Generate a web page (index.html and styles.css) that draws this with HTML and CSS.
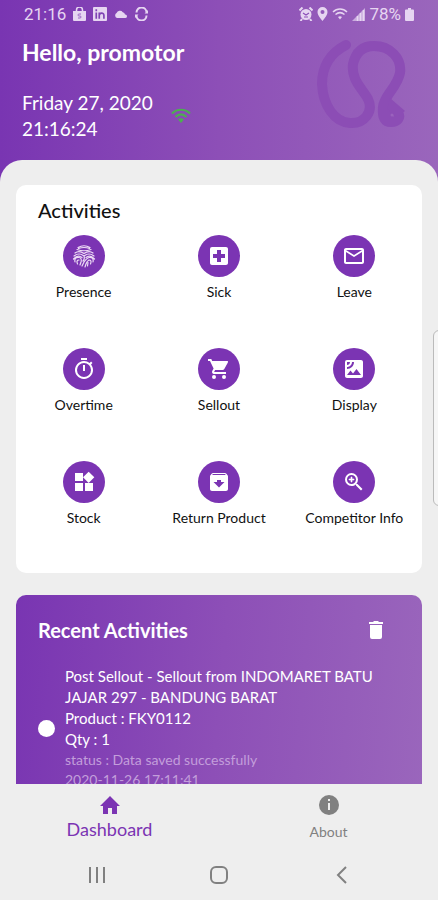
FILE: index.html
```html
<!DOCTYPE html>
<html lang="en">
<head>
<meta charset="utf-8">
<meta name="viewport" content="width=device-width, initial-scale=1">
<title>Dashboard</title>
<link rel="stylesheet" href="styles.css">
</head>
<body>
<div class="app">
  <header class="header">
    <div class="status">
      <div class="status-group">
        <span class="clock">21:16</span>
        <svg class="bag" width="13" height="14" viewBox="0 0 13 14"><path d="M0 4h13v9a1 1 0 0 1-1 1H1a1 1 0 0 1-1-1z" fill="currentColor"/><path d="M3.500 5V3a3 3 0 0 1 6 0v2" fill="none" stroke="currentColor" stroke-width="1.500"/><path d="M8 7H6a1 1 0 0 0 0 2h1a1 1 0 0 1 0 2H5" fill="none" stroke="#9a67c4"/></svg>
        <svg width="14" height="14" viewBox="0 0 15 15"><rect width="15" height="15" rx="1" fill="currentColor"/><path d="M3.500 6v6.500M3.500 2.500v2M6.700 12.500V6M6.700 9c0-3 5-3.500 5 0v3.500" fill="none" stroke="#7f42b4" stroke-width="1.800"/></svg>
        <svg width="14" height="8" viewBox="0 0 15 9"><path d="M3 9a3 3 0 0 1-.5-5.500A4 4 0 0 1 9.500 2.500 3 3 0 0 1 12 5a2 2 0 0 1 .5 4z" fill="currentColor"/></svg>
        <svg width="13" height="14" viewBox="0 0 13 14"><path d="M1.500 5.500a5 5 0 0 1 10 0M11.500 8.500a5 5 0 0 1-10 0" fill="none" stroke="currentColor" stroke-width="2"/><path d="M13 3v3.500H9.500zM0 11V7.500h3.500z" fill="currentColor"/></svg>
      </div>
      <div class="status-group right">
        <svg width="14" height="14" viewBox="0 0 14 14"><circle cx="7" cy="7.500" r="5.500" fill="currentColor"/><path d="M.5 3.500l3-3M13.500 3.500l-3-3M3 12l-1.500 2M11 12l1.500 2" stroke="currentColor" stroke-width="2"/><path d="M4 6l3 2 3-2M5 10h4" fill="none" stroke="#8c4fb8" stroke-width="1.200"/></svg>
        <svg width="11" height="14" viewBox="0 0 11 14"><path fill-rule="evenodd" d="M5.500 0A5 5 0 0 0 .5 5c0 3.500 5 9 5 9s5-5.500 5-9a5 5 0 0 0-5-5zm0 3a2 2 0 1 1 0 4 2 2 0 0 1 0-4z" fill="currentColor"/></svg>
        <svg class="wifi" width="16" height="13" viewBox="0 0 16 13"><path d="M1 4c4-4 10-4 14 0M3.500 6.500c3-2.500 6-2.500 9 0" fill="none" stroke="currentColor" stroke-width="1.500"/><path d="M6 9q2-1.500 4 0l-2 2.500z" fill="currentColor"/></svg>
        <svg width="13" height="13" viewBox="0 0 13 13"><path d="M0 13L13 0v13z" fill="currentColor" opacity=".65"/><path d="M5.500 8v5M8.500 5v8M11.500 2v11" stroke="currentColor" stroke-width="1.500"/></svg>
        <span class="percent">78%</span>
        <svg width="9" height="13" viewBox="0 0 9 13"><path d="M3 0h3v1.500h2a1 1 0 0 1 1 1V12a1 1 0 0 1-1 1H1a1 1 0 0 1-1-1V2.500a1 1 0 0 1 1-1h2z" fill="currentColor"/></svg>
      </div>
    </div>
    <div class="greeting">
      <div>
        <h1>Hello, promotor</h1>
        <div class="date-row">
          <p>Friday 27, 2020<br>21:16:24</p>
          <svg width="20" height="16" viewBox="0 0 20 16"><path d="M1 5.500c5-5 13-5 18 0M4.500 9c3.500-3.500 7.500-3.500 11 0" fill="none" stroke="#4caf50" stroke-width="2.200"/><path d="M7 11.500q3-2.500 6 0L10 15z" fill="#4caf50"/></svg>
        </div>
      </div>
      <svg class="brand" width="92" height="92" viewBox="0 0 92 92"><path d="M32 6C16 14 8 28 8 45C9 66 20 83 36 84C50 85 60 73 54 60C48 49 37 41 39 25C42 12 50 7 60 7C76 7 88 19 86 34C83 49 70 56 69 68C68 79 71 83 77 83C84 83 87 78 84 74C78 66 74 70 74 76" fill="none" stroke="#8c4db5" stroke-width="10" stroke-linecap="round" stroke-linejoin="round"/><path d="M76 59l15 13-8 6-10-8z" fill="#8c4db5"/><circle cx="78" cy="76" r="1.500" fill="#9a62bd"/></svg>
    </div>
  </header>

  <main class="sheet">
    <section class="card">
      <h2>Activities</h2>
      <div class="grid">
        <button type="button"><span class="disc"><svg class="lines" viewBox="0 0 24 24"><path d="M6 3.500Q12 0 18 3.500M5 5.500Q12 8 19 5.500M6.500 4.500Q12 2.500 17.500 4.500M3 9Q7 6 12 9.500Q17 6 21 9M2 12Q7 8 12 12Q17 8 22 12M1.500 15Q6 10 10 13.500M22.500 15Q18 10 14 13.500M3 18Q2 13 7 13.500Q10 14 9 18L8 21M21 18Q22 13 17 13.500Q15 14 12 18L10 22M5.500 20Q4 16 7 16M18.500 20Q20 16 17 16Q15 17 14 20L13 23M12 12Q13 15 11 17M16 18.500L15.500 22"/></svg></span><span>Presence</span></button>
        <button type="button"><span class="disc"><svg viewBox="0 0 24 24"><path d="M19 3H5a2 2 0 0 0-2 2v14c0 1.100.9 2 2 2h14c1.100 0 2-.9 2-2V5c0-1.100-.9-2-2-2zm-1 11h-4v4h-4v-4H6v-4h4V6h4v4h4v4z"/></svg></span><span>Sick</span></button>
        <button type="button"><span class="disc"><svg viewBox="0 0 24 24"><path d="M20 4H4c-1.100 0-2 .9-2 2v12c0 1.100.9 2 2 2h16c1.100 0 2-.9 2-2V6c0-1.100-.9-2-2-2zm0 14H4V8l8 5 8-5v10zm-8-7L4 6h16l-8 5z"/></svg></span><span>Leave</span></button>
        <button type="button"><span class="disc"><svg viewBox="0 0 24 24"><path d="M15 1H9v2h6V1zm-4 13h2V8h-2v6zm8.030-6.610l1.420-1.420c-.43-.51-.9-.99-1.410-1.410l-1.420 1.420A8.960 8.960 0 0 0 12 4a9 9 0 1 0 7.030 3.390zM12 20a7 7 0 1 1 0-14 7 7 0 0 1 0 14z"/></svg></span><span>Overtime</span></button>
        <button type="button"><span class="disc"><svg viewBox="0 0 24 24"><path d="M7 18a2 2 0 1 0 0 4 2 2 0 0 0 0-4zM1 2v2h2l3.600 7.590-1.350 2.450C4.520 15.370 5.480 17 7 17h12v-2H7.420a.25.25 0 0 1-.25-.25l.03-.12.900-1.630h7.450c.75 0 1.410-.41 1.750-1.030l3.580-6.490A1 1 0 0 0 20 4H5.210l-.94-2H1zm16 16a2 2 0 1 0 0 4 2 2 0 0 0 0-4z"/></svg></span><span>Sellout</span></button>
        <button type="button"><span class="disc"><svg viewBox="0 0 24 24"><path d="M19 3H5a2 2 0 0 0-2 2v14c0 1.100.9 2 2 2h14c1.100 0 2-.9 2-2V5c0-1.100-.9-2-2-2zM5 4.990h3C8 6.650 6.660 8 5 8V4.990zM5 12v-2c2.760 0 5-2.250 5-5.010h2C12 8.860 8.870 12 5 12zm0 6l3.500-4.500 2.500 3.010L14.500 12l4.500 6H5z"/></svg></span><span>Display</span></button>
        <button type="button"><span class="disc"><svg viewBox="0 0 24 24"><path d="M13 13v8h8v-8h-8zM3 21h8v-8H3v8zM3 3v8h8V3H3zm13.660-1.310L11 7.340 16.660 13l5.660-5.660-5.660-5.650z"/></svg></span><span>Stock</span></button>
        <button type="button"><span class="disc"><svg viewBox="0 0 24 24"><path d="M20.540 5.230l-1.390-1.680C18.880 3.210 18.470 3 18 3H6c-.47 0-.88.21-1.160.55L3.460 5.230C3.170 5.570 3 6.020 3 6.500V19c0 1.100.9 2 2 2h14c1.100 0 2-.9 2-2V6.500c0-.48-.17-.93-.46-1.270zM12 17.500L6.500 12H10v-2h4v2h3.500L12 17.500zM5.120 5l.81-1h12l.94 1H5.120z"/></svg></span><span>Return Product</span></button>
        <button type="button"><span class="disc"><svg viewBox="0 0 24 24"><path d="M15.500 14h-.79l-.28-.27A6.470 6.470 0 0 0 16 9.500 6.500 6.500 0 1 0 9.500 16c1.610 0 3.090-.59 4.230-1.570l.27.28v.79l5 4.990L20.490 19l-4.990-5zm-6 0a4.500 4.500 0 1 1 0-9 4.500 4.500 0 0 1 0 9z"/><path d="M12 10h-2v2H9v-2H7V9h2V7h1v2h2v1z" stroke="#fff" stroke-width=".6"/></svg></span><span>Competitor Info</span></button>
      </div>
    </section>

    <section class="recent">
      <div class="recent-head">
        <h2>Recent Activities</h2>
        <button type="button" class="trash" aria-label="Delete"><svg width="14" height="18" viewBox="0 0 14 18"><path d="M0 1h4l1-1h4l1 1h4v2H0zM1 4h12v12a2 2 0 0 1-2 2H3a2 2 0 0 1-2-2z" fill="#fff"/></svg></button>
      </div>
      <div class="entry">
        <span class="dot"></span>
        <div class="entry-text">
          <p>Post Sellout - Sellout from INDOMARET BATU JAJAR 297 - BANDUNG BARAT</p>
          <p>Product : FKY0112</p>
          <p>Qty : 1</p>
          <p class="meta">status : Data saved successfully</p>
          <p class="meta">2020-11-26 17:11:41</p>
        </div>
      </div>
    </section>
  </main>

  <footer class="footer">
    <nav class="tabs">
      <a href="#dashboard" class="tab active"><svg width="20" height="18" viewBox="0 0 20 18"><path d="M8 18v-6h4v6h5v-8h3L10 0 0 10h3v8z" fill="currentColor"/></svg><span>Dashboard</span></a>
      <a href="#about" class="tab"><svg width="22" height="22" viewBox="0 0 22 22"><circle cx="11" cy="11" r="10" fill="currentColor"/><path d="M10 5h2v2h-2zM10 9h2v7h-2z" fill="#eee"/></svg><span>About</span></a>
    </nav>
    <div class="system">
      <button type="button" aria-label="Recent apps"><svg width="18" height="18" viewBox="0 0 18 18"><path d="M2 1v16M9 1v16M16 1v16" stroke="currentColor" stroke-width="2"/></svg></button>
      <button type="button" aria-label="Home"><svg width="18" height="18" viewBox="0 0 18 18"><rect x="1" y="1" width="16" height="16" rx="5" fill="none" stroke="currentColor" stroke-width="2"/></svg></button>
      <button type="button" aria-label="Back"><svg width="18" height="18" viewBox="0 0 18 18"><path d="M14 1L6 9l8 8" fill="none" stroke="currentColor" stroke-width="2"/></svg></button>
    </div>
  </footer>
  <div class="edge"></div>
</div>
</body>
</html>
```
FILE: styles.css
```css
* { box-sizing: border-box; }
body, h1, h2, p { margin: 0; }
body { font-family: Lato, "Open Sans", sans-serif; color: #111; }
svg { display: block; flex: none; }
button { font: inherit; color: inherit; background: none; border: 0; padding: 0; }

.app {
  position: relative;
  display: flex;
  flex-direction: column;
  height: 100vh;
  overflow: hidden;
  background: linear-gradient(90deg, #7935b2, #8d4fb7 50%, #9a66bc);
}

.header { flex: none; color: #fff; }
.status {
  display: flex;
  justify-content: space-between;
  height: 28px;
  padding: 0 24px;
  font: 17px/28px Roboto, sans-serif;
  color: #e6d5f1;
}
.status-group { display: flex; align-items: center; gap: 7px; }
.status-group.right { gap: 4px; }

.greeting {
  display: flex;
  justify-content: space-between;
  height: 132px;
  padding: 8px 32px 0 22px;
}
h1 { font-size: 23px; line-height: 32px; font-weight: 700; }
.date-row { display: flex; align-items: center; gap: 18px; margin-top: 22px; }
.date-row p { font-size: 19px; line-height: 26px; }
.brand { margin-top: 3px; }

.sheet {
  flex: 1;
  min-height: 0;
  overflow: hidden;
  padding: 25px 16px 0;
  border-radius: 22px 22px 0 0;
  background: #eee;
}
.card {
  padding: 10px 0 39px;
  border-radius: 10px;
  background: #fff;
}
h2 { font-size: 20px; line-height: 30px; font-weight: 500; }
.card h2 { padding-left: 22px; }
.grid {
  display: grid;
  grid-template-columns: repeat(3, 1fr);
  row-gap: 46px;
  margin-top: 10px;
  padding-bottom: 6px;
}
.grid button {
  display: flex;
  flex-direction: column;
  align-items: center;
  gap: 5px;
  font-size: 14px;
  line-height: 20px;
  white-space: nowrap;
}
.disc {
  display: grid;
  place-items: center;
  width: 42px;
  height: 42px;
  border-radius: 50%;
  background: #7b34b3;
}
.disc svg { width: 24px; height: 24px; fill: #fff; }
.disc .lines { fill: none; stroke: #eddcf5; stroke-width: 1.2; stroke-linecap: round; }

.recent {
  margin-top: 22px;
  padding: 20px 22px;
  border-radius: 10px;
  color: #fff;
  background: linear-gradient(95deg, #7935b2, #8d4fb7 50%, #9a66bc);
}
.recent-head { display: flex; justify-content: space-between; align-items: center; }
.recent h2 { font-weight: 700; }
.trash { margin-right: 17px; }
.entry { display: flex; align-items: center; gap: 10px; margin-top: 21px; }
.dot { flex: none; width: 17px; height: 17px; border-radius: 50%; background: #fff; }
.entry-text { font-size: 15px; line-height: 21px; }
.entry-text .meta { font-size: 14px; line-height: 20px; color: #c39edb; }

.footer { flex: none; height: 116px; background: #eee; color: #808080; }
.tabs { display: grid; grid-template-columns: 1fr 1fr; height: 66px; }
.tab {
  display: flex;
  flex-direction: column;
  align-items: center;
  gap: 6px;
  padding-top: 10px;
  font-size: 14px;
  line-height: 20px;
  color: inherit;
  text-decoration: none;
}
.tab.active { gap: 5px; padding-top: 12px; font-size: 18px; color: #7b34b3; }
.system {
  display: grid;
  grid-template-columns: repeat(3, 1fr);
  justify-items: center;
  height: 50px;
  padding: 0 36px;
}

.edge {
  position: absolute;
  top: 330px;
  right: -8px;
  width: 13px;
  height: 176px;
  border: 1px solid #bbb;
  border-radius: 6px;
  background: #f6f6f6;
}
```
